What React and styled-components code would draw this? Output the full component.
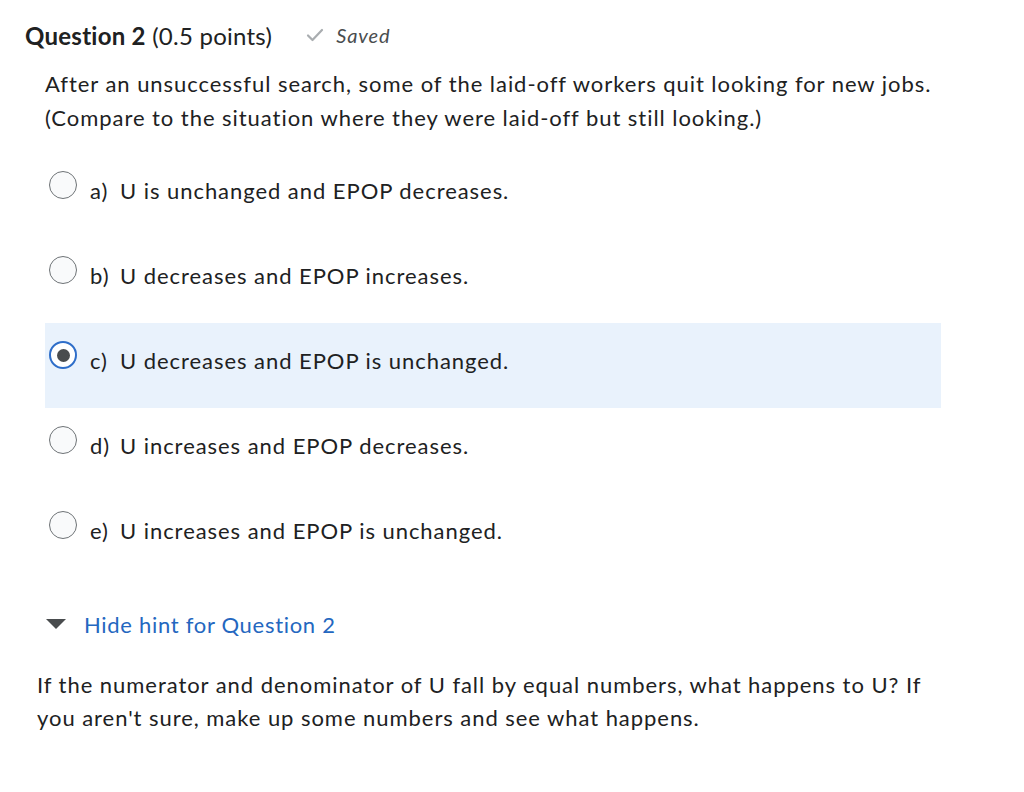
import React from "react";
import styled, { createGlobalStyle } from "styled-components";

const Global = createGlobalStyle`
  html, body { margin: 0; padding: 0; background: #ffffff; }
  body { font-family: Lato, "Open Sans", sans-serif; color: #202122; }
`;

const Page = styled.div`
  width: 1024px;
  height: 792px;
  box-sizing: border-box;
  padding: 19px 0 0 25px;
`;

const Header = styled.div`
  display: flex;
  align-items: center;
  height: 32px;
`;

const Title = styled.h2`
  margin: 0;
  font-size: 24px;
  font-weight: 400;
  letter-spacing: 0.25px;
  color: #202122;
  span { font-weight: 700; }
`;

const Saved = styled.div`
  display: flex;
  align-items: center;
  gap: 12px;
  margin-left: 34px;
  font-style: italic;
  font-size: 20px;
  letter-spacing: 0.9px;
  color: #494c4e;
`;

const Body = styled.div`
  padding-left: 20px;
  width: 896px;
`;

const Prompt = styled.p`
  margin: 16px 0 0 0;
  font-size: 22px;
  letter-spacing: 0.95px;
  line-height: 34px;
  white-space: nowrap;
`;

const Options = styled.div`
  display: flex;
  flex-direction: column;
  margin-top: 18px;
`;

const Option = styled.label`
  display: flex;
  align-items: flex-start;
  height: 85px;
  box-sizing: border-box;
  padding: 20px 0 0 4px;
  background: ${(p) => (p.$selected ? "#e9f2fc" : "transparent")};
  font-size: 22px;
  letter-spacing: 0.95px;
  line-height: 36px;
  cursor: pointer;
`;

const Radio = styled.span`
  flex: none;
  width: 28px;
  height: 28px;
  box-sizing: border-box;
  margin-top: -2px;
  border-radius: 50%;
  border: ${(p) => (p.$checked ? "2.5px solid #2e6ec9" : "1.5px solid #6e7376")};
  background: ${(p) => (p.$checked ? "#ffffff" : "#f9fafb")};
  display: flex;
  align-items: center;
  justify-content: center;
  &::after {
    content: "";
    display: ${(p) => (p.$checked ? "block" : "none")};
    width: 13px;
    height: 13px;
    border-radius: 50%;
    background: #494c4e;
  }
`;

const Letter = styled.span`
  margin-left: 13px;
  width: 30px;
  flex: none;
`;

const HintToggle = styled.div`
  display: flex;
  align-items: center;
  gap: 18px;
  margin-top: 29px;
  margin-left: 1px;
  font-size: 22px;
  letter-spacing: 0.7px;
  color: #2467c0;
  height: 34px;
`;

const Hint = styled.p`
  margin: 27px 0 0 -8px;
  font-size: 22px;
  letter-spacing: 0.95px;
  line-height: 33px;
  width: 900px;
`;

const options = [
  ["a)", "U is unchanged and EPOP decreases."],
  ["b)", "U decreases and EPOP increases."],
  ["c)", "U decreases and EPOP is unchanged."],
  ["d)", "U increases and EPOP decreases."],
  ["e)", "U increases and EPOP is unchanged."],
];

export default function App() {
  return (
    <Page>
      <Global />
      <Header>
        <Title>
          <span>Question 2</span> (0.5 points)
        </Title>
        <Saved>
          <svg width="18" height="14" viewBox="0 0 18 14">
            <path d="M2 7.5 L6.5 12 L16 2" fill="none" stroke="#a9adb0" strokeWidth="2.2" strokeLinecap="round" strokeLinejoin="round" />
          </svg>
          Saved
        </Saved>
      </Header>
      <Body>
        <Prompt>
          After an unsuccessful search, some of the laid-off workers quit looking for new jobs.
          <br />
          (Compare to the situation where they were laid-off but still looking.)
        </Prompt>
        <Options>
          {options.map(([l, t], i) => (
            <Option key={l} $selected={i === 2}>
              <Radio $checked={i === 2} />
              <Letter>{l}</Letter>
              <span>{t}</span>
            </Option>
          ))}
        </Options>
        <HintToggle>
          <svg width="20" height="10" viewBox="0 0 20 10">
            <path d="M0 0 L20 0 L10 10 Z" fill="#494c4e" />
          </svg>
          Hide hint for Question 2
        </HintToggle>
        <Hint>
          If the numerator and denominator of U fall by equal numbers, what happens to U? If you aren't sure, make up some numbers and see what happens.
        </Hint>
      </Body>
    </Page>
  );
}
